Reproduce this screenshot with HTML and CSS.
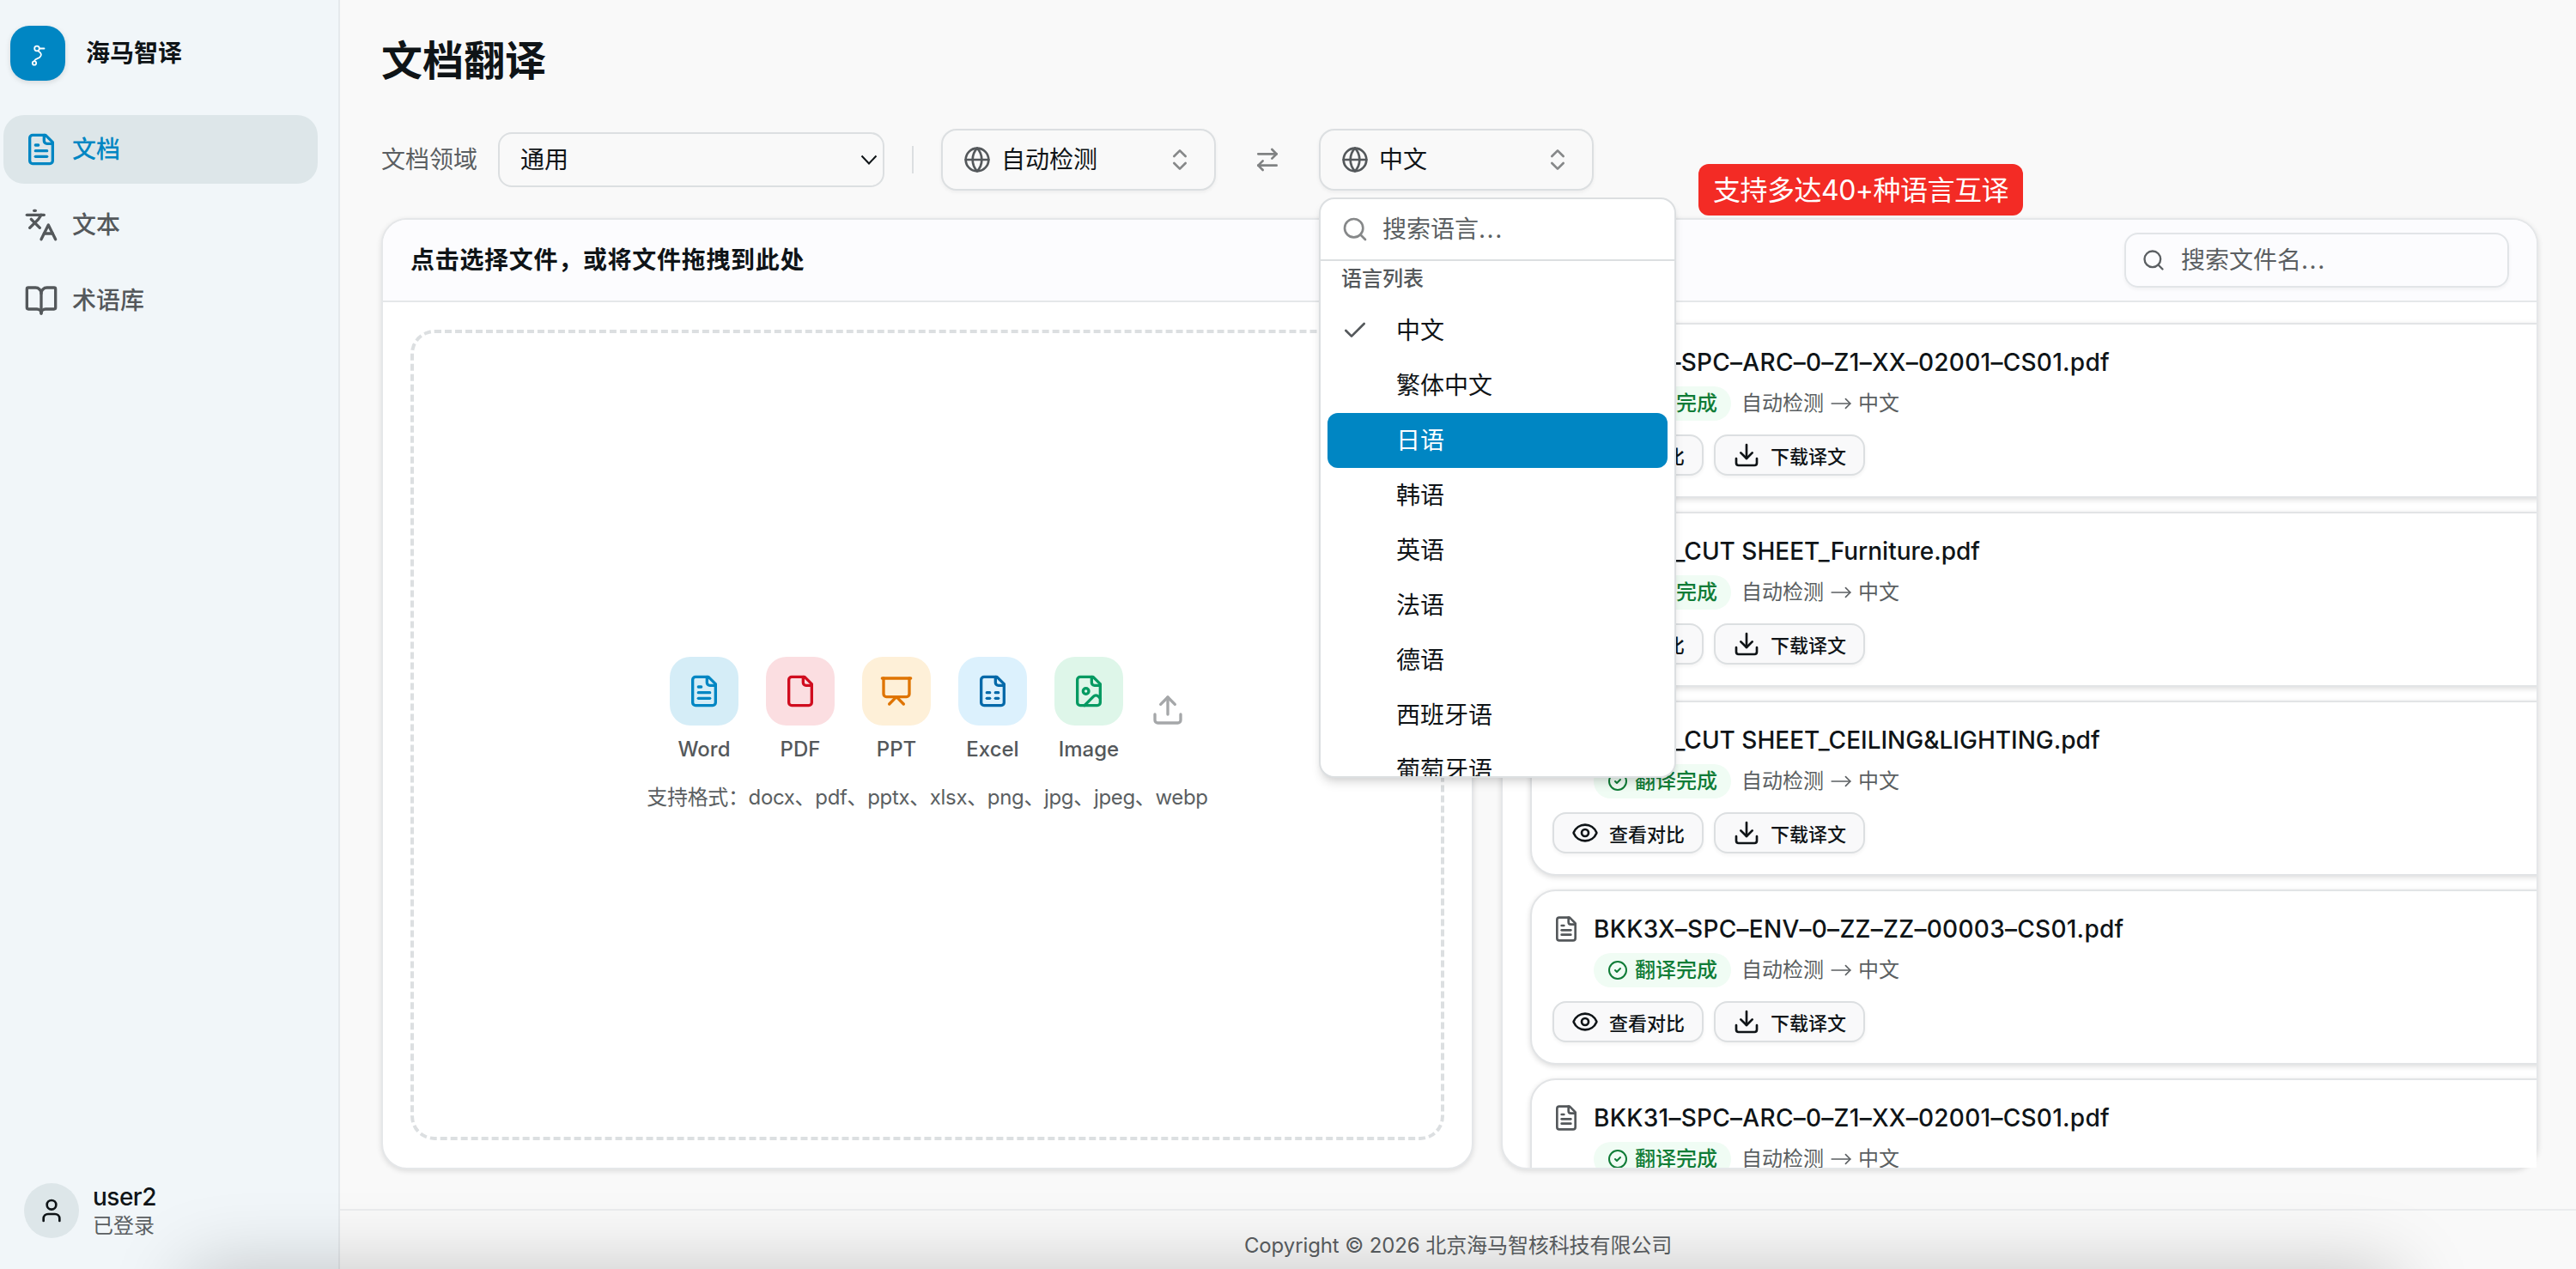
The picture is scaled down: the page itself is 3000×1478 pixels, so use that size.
FILE: index.html
```html
<!DOCTYPE html>
<html lang="zh-CN">
<head>
    <meta charset="UTF-8">
    <meta name="viewport" content="width=device-width, initial-scale=1.0">
    <title>海马智译 - 文档翻译</title>
    <link rel="stylesheet" href="styles.css">
</head>
<body>

<!-- Ícones reutilizados -->
<svg class="sprite" xmlns="http://www.w3.org/2000/svg">
    <symbol id="i-file-text" viewBox="0 0 24 24">
        <path d="M15 2H6a2 2 0 0 0-2 2v16a2 2 0 0 0 2 2h12a2 2 0 0 0 2-2V7Z"/>
        <path d="M14 2v4a2 2 0 0 0 2 2h4"/>
        <path d="M10 9H8"/><path d="M16 13H8"/><path d="M16 17H8"/>
    </symbol>
    <symbol id="i-file" viewBox="0 0 24 24">
        <path d="M15 2H6a2 2 0 0 0-2 2v16a2 2 0 0 0 2 2h12a2 2 0 0 0 2-2V7Z"/>
        <path d="M14 2v4a2 2 0 0 0 2 2h4"/>
    </symbol>
    <symbol id="i-sheet" viewBox="0 0 24 24">
        <path d="M15 2H6a2 2 0 0 0-2 2v16a2 2 0 0 0 2 2h12a2 2 0 0 0 2-2V7Z"/>
        <path d="M14 2v4a2 2 0 0 0 2 2h4"/>
        <path d="M8 13h2"/><path d="M14 13h2"/><path d="M8 17h2"/><path d="M14 17h2"/>
    </symbol>
    <symbol id="i-file-image" viewBox="0 0 24 24">
        <path d="M15 2H6a2 2 0 0 0-2 2v16a2 2 0 0 0 2 2h12a2 2 0 0 0 2-2V7Z"/>
        <path d="M14 2v4a2 2 0 0 0 2 2h4"/>
        <circle cx="10" cy="12" r="2"/>
        <path d="m20 17-1.296-1.296a2.41 2.41 0 0 0-3.408 0L9 22"/>
    </symbol>
    <symbol id="i-slides" viewBox="0 0 24 24">
        <path d="M2 3h20"/>
        <path d="M21 3v11a2 2 0 0 1-2 2H5a2 2 0 0 1-2-2V3"/>
        <path d="m7 21 5-5 5 5"/>
    </symbol>
    <symbol id="i-translate" viewBox="0 0 24 24">
        <path d="m5 8 6 6"/><path d="m4 14 6-6 2-3"/><path d="M2 5h12"/><path d="M7 2h1"/>
        <path d="m22 22-5-10-5 10"/><path d="M14 18h6"/>
    </symbol>
    <symbol id="i-book" viewBox="0 0 24 24">
        <path d="M12 7v14"/>
        <path d="M3 18a1 1 0 0 1-1-1V4a1 1 0 0 1 1-1h5a4 4 0 0 1 4 4 4 4 0 0 1 4-4h5a1 1 0 0 1 1 1v13a1 1 0 0 1-1 1h-6a3 3 0 0 0-3 3 3 3 0 0 0-3-3z"/>
    </symbol>
    <symbol id="i-user" viewBox="0 0 24 24">
        <path d="M19 21v-2a4 4 0 0 0-4-4H9a4 4 0 0 0-4 4v2"/>
        <circle cx="12" cy="7" r="4"/>
    </symbol>
    <symbol id="i-globe" viewBox="0 0 24 24">
        <circle cx="12" cy="12" r="10"/>
        <path d="M12 2a14.5 14.5 0 0 0 0 20 14.5 14.5 0 0 0 0-20"/>
        <path d="M2 12h20"/>
    </symbol>
    <symbol id="i-updown" viewBox="0 0 24 24">
        <path d="m7 15 5 5 5-5"/><path d="m7 9 5-5 5 5"/>
    </symbol>
    <symbol id="i-swap" viewBox="0 0 24 24">
        <path d="m16 3 4 4-4 4"/><path d="M20 7H4"/><path d="m8 21-4-4 4-4"/><path d="M4 17h16"/>
    </symbol>
    <symbol id="i-search" viewBox="0 0 24 24">
        <circle cx="11" cy="11" r="8"/><path d="m21 21-4.3-4.3"/>
    </symbol>
    <symbol id="i-check" viewBox="0 0 24 24">
        <path d="M20 6 9 17l-5-5"/>
    </symbol>
    <symbol id="i-check-circle" viewBox="0 0 24 24">
        <circle cx="12" cy="12" r="10"/><path d="m9 12 2 2 4-4"/>
    </symbol>
    <symbol id="i-upload" viewBox="0 0 24 24">
        <path d="M21 15v4a2 2 0 0 1-2 2H5a2 2 0 0 1-2-2v-4"/>
        <path d="m17 8-5-5-5 5"/><path d="M12 3v12"/>
    </symbol>
    <symbol id="i-download" viewBox="0 0 24 24">
        <path d="M21 15v4a2 2 0 0 1-2 2H5a2 2 0 0 1-2-2v-4"/>
        <path d="m7 10 5 5 5-5"/><path d="M12 15V3"/>
    </symbol>
    <symbol id="i-eye" viewBox="0 0 24 24">
        <path d="M2.062 12.348a1 1 0 0 1 0-.696 10.75 10.75 0 0 1 19.876 0 1 1 0 0 1 0 .696 10.75 10.75 0 0 1-19.876 0"/>
        <circle cx="12" cy="12" r="3"/>
    </symbol>
    <symbol id="i-arrow" viewBox="0 0 24 24">
        <path d="M2 12h20"/><path d="m17 7 5 5-5 5"/>
    </symbol>
</svg>

<aside class="sidebar">
    <div class="brand">
        <div class="brand-logo">
            <svg viewBox="0 0 64 64">
                <circle cx="31" cy="26.5" r="2.8"/>
                <path d="M34 26.5h5.5"/>
                <path d="M32.5 29.5c4 2 4.500 5 1.500 7.500-2.500 1.500-5 1.500-6 4"/>
                <circle cx="28" cy="43.500" r="2.200"/>
            </svg>
        </div>
        <span class="brand-name">海马智译</span>
    </div>
    <nav class="nav">
        <a class="nav-item active"><svg class="icon icon-lg"><use href="#i-file-text"/></svg>文档</a>
        <a class="nav-item"><svg class="icon icon-lg"><use href="#i-translate"/></svg>文本</a>
        <a class="nav-item"><svg class="icon icon-lg"><use href="#i-book"/></svg>术语库</a>
    </nav>
    <div class="user">
        <div class="avatar"><svg class="icon"><use href="#i-user"/></svg></div>
        <div>
            <div class="user-name">user2</div>
            <div class="user-status">已登录</div>
        </div>
    </div>
</aside>

<div class="page">
    <main class="main">
        <h1>文档翻译</h1>

        <div class="toolbar">
            <span class="toolbar-label">文档领域</span>
            <div class="select">通用
                <svg class="select-arrow" viewBox="0 0 20 12"><path d="M1.500 1.500 10 10.500l8.500-9"/></svg>
            </div>
            <div class="divider"></div>
            <div class="lang-btn">
                <svg class="icon"><use href="#i-globe"/></svg>
                <span>自动检测</span>
                <svg class="icon muted"><use href="#i-updown"/></svg>
            </div>
            <svg class="icon swap"><use href="#i-swap"/></svg>
            <div class="lang-picker">
                <div class="lang-btn">
                    <svg class="icon"><use href="#i-globe"/></svg>
                    <span>中文</span>
                    <svg class="icon muted"><use href="#i-updown"/></svg>
                </div>
                <div class="dropdown">
                    <div class="dropdown-search">
                        <svg class="icon"><use href="#i-search"/></svg>
                        <span>搜索语言<span class="dots">...</span></span>
                    </div>
                    <div class="dropdown-list">
                        <div class="dropdown-label">语言列表</div>
                        <div class="option"><svg class="icon"><use href="#i-check"/></svg>中文</div>
                        <div class="option">繁体中文</div>
                        <div class="option selected">日语</div>
                        <div class="option">韩语</div>
                        <div class="option">英语</div>
                        <div class="option">法语</div>
                        <div class="option">德语</div>
                        <div class="option">西班牙语</div>
                        <div class="option">葡萄牙语</div>
                    </div>
                </div>
                <div class="callout">支持多达40+种语言互译</div>
            </div>
        </div>

        <div class="panels">
            <section class="card upload-card">
                <div class="card-header"><h2>点击选择文件，或将文件拖拽到此处</h2></div>
                <div class="card-body">
                    <div class="dropzone">
                        <div class="formats">
                            <div class="format"><div class="tile word"><svg class="icon icon-lg"><use href="#i-file-text"/></svg></div>Word</div>
                            <div class="format"><div class="tile pdf"><svg class="icon icon-lg"><use href="#i-file"/></svg></div>PDF</div>
                            <div class="format"><div class="tile ppt"><svg class="icon icon-lg"><use href="#i-slides"/></svg></div>PPT</div>
                            <div class="format"><div class="tile excel"><svg class="icon icon-lg"><use href="#i-sheet"/></svg></div>Excel</div>
                            <div class="format"><div class="tile image"><svg class="icon icon-lg"><use href="#i-file-image"/></svg></div>Image</div>
                            <svg class="icon icon-lg upload-icon"><use href="#i-upload"/></svg>
                        </div>
                        <p class="hint">支持格式：docx、pdf、pptx、xlsx、png、jpg、jpeg、webp</p>
                    </div>
                </div>
            </section>

            <section class="card files-card">
                <div class="card-header">
                    <div class="file-search">
                        <svg class="icon"><use href="#i-search"/></svg>
                        <span>搜索文件名<span class="dots">...</span></span>
                    </div>
                </div>
                <div class="file-list">
                    <article class="file">
                        <div class="file-title code"><svg class="icon"><use href="#i-file-text"/></svg><span>BKK31–SPC–ARC–0–Z1–XX–02001–CS01.pdf</span></div>
                        <div class="file-meta">
                            <span class="status"><svg class="icon"><use href="#i-check-circle"/></svg>翻译完成</span>
                            <span class="route">自动检测<svg class="icon"><use href="#i-arrow"/></svg>中文</span>
                        </div>
                        <div class="file-actions">
                            <button class="btn"><svg class="icon"><use href="#i-eye"/></svg>查看对比</button>
                            <button class="btn"><svg class="icon"><use href="#i-download"/></svg>下载译文</button>
                        </div>
                    </article>
                    <article class="file">
                        <div class="file-title"><svg class="icon"><use href="#i-file-text"/></svg><span>BKK3X_CUT SHEET_Furniture.pdf</span></div>
                        <div class="file-meta">
                            <span class="status"><svg class="icon"><use href="#i-check-circle"/></svg>翻译完成</span>
                            <span class="route">自动检测<svg class="icon"><use href="#i-arrow"/></svg>中文</span>
                        </div>
                        <div class="file-actions">
                            <button class="btn"><svg class="icon"><use href="#i-eye"/></svg>查看对比</button>
                            <button class="btn"><svg class="icon"><use href="#i-download"/></svg>下载译文</button>
                        </div>
                    </article>
                    <article class="file">
                        <div class="file-title"><svg class="icon"><use href="#i-file-text"/></svg><span>BKK3X_CUT SHEET_CEILING&amp;LIGHTING.pdf</span></div>
                        <div class="file-meta">
                            <span class="status"><svg class="icon"><use href="#i-check-circle"/></svg>翻译完成</span>
                            <span class="route">自动检测<svg class="icon"><use href="#i-arrow"/></svg>中文</span>
                        </div>
                        <div class="file-actions">
                            <button class="btn"><svg class="icon"><use href="#i-eye"/></svg>查看对比</button>
                            <button class="btn"><svg class="icon"><use href="#i-download"/></svg>下载译文</button>
                        </div>
                    </article>
                    <article class="file">
                        <div class="file-title code"><svg class="icon"><use href="#i-file-text"/></svg><span>BKK3X–SPC–ENV–0–ZZ–ZZ–00003–CS01.pdf</span></div>
                        <div class="file-meta">
                            <span class="status"><svg class="icon"><use href="#i-check-circle"/></svg>翻译完成</span>
                            <span class="route">自动检测<svg class="icon"><use href="#i-arrow"/></svg>中文</span>
                        </div>
                        <div class="file-actions">
                            <button class="btn"><svg class="icon"><use href="#i-eye"/></svg>查看对比</button>
                            <button class="btn"><svg class="icon"><use href="#i-download"/></svg>下载译文</button>
                        </div>
                    </article>
                    <article class="file">
                        <div class="file-title code"><svg class="icon"><use href="#i-file-text"/></svg><span>BKK31–SPC–ARC–0–Z1–XX–02001–CS01.pdf</span></div>
                        <div class="file-meta">
                            <span class="status"><svg class="icon"><use href="#i-check-circle"/></svg>翻译完成</span>
                            <span class="route">自动检测<svg class="icon"><use href="#i-arrow"/></svg>中文</span>
                        </div>
                        <div class="file-actions">
                            <button class="btn"><svg class="icon"><use href="#i-eye"/></svg>查看对比</button>
                            <button class="btn"><svg class="icon"><use href="#i-download"/></svg>下载译文</button>
                        </div>
                    </article>
                </div>
            </section>
        </div>
    </main>
    <footer class="footer">Copyright © 2026 北京海马智核科技有限公司</footer>
</div>

<div class="bottom-shade"></div>

</body>
</html>
```

FILE: styles.css
```css
* {
    box-sizing: border-box;
}
body {
    display: flex;
    height: 1478px;
    margin: 0;
    overflow: hidden;
    font-family: Inter, "Noto Sans CJK SC", sans-serif;
    font-size: 28px;
    line-height: 40px;
    color: #0f1417;
    background-color: #f9f9f9;
}
h1, h2, p {
    margin: 0;
}
.sprite {
    position: absolute;
    width: 0;
    height: 0;
}
.icon {
    flex: none;
    width: 32px;
    height: 32px;
    fill: none;
    stroke: currentColor;
    stroke-width: 2;
    stroke-linecap: round;
    stroke-linejoin: round;
}
.icon-lg {
    width: 40px;
    height: 40px;
}
.dots {
    letter-spacing: 1.5px;
}

/* Barra lateral */
.sidebar {
    display: flex;
    flex-direction: column;
    flex: none;
    width: 396px;
    padding: 30px 24px 34px 4px;
    background-color: #f1f6f9;
    border-right: 2px solid #e5e9ec;
}
.brand {
    display: flex;
    align-items: center;
    gap: 24px;
    padding-left: 8px;
    margin-bottom: 40px;
}
.brand-logo {
    width: 64px;
    height: 64px;
    border-radius: 22px;
    background-color: #0086c3;
    box-shadow: 0 2px 6px rgba(0, 0, 0, 0.12);
}
.brand-logo svg {
    display: block;
    fill: none;
    stroke: #fff;
    stroke-width: 1.8;
    stroke-linecap: round;
}
.brand-name {
    font-weight: 600;
}
.nav {
    display: flex;
    flex-direction: column;
    gap: 8px;
}
.nav-item {
    display: flex;
    align-items: center;
    gap: 16px;
    height: 80px;
    padding: 0 24px;
    border-radius: 24px;
    font-weight: 500;
    color: #54585b;
}
.nav-item.active {
    color: #0086c3;
    background-color: #dde6e9;
}
.user {
    display: flex;
    align-items: center;
    gap: 16px;
    margin-top: auto;
    padding-left: 24px;
}
.avatar {
    display: flex;
    align-items: center;
    justify-content: center;
    width: 64px;
    height: 64px;
    border-radius: 50%;
    background-color: #dde6e9;
}
.user-name {
    font-weight: 500;
    line-height: 36px;
    letter-spacing: -0.5px;
}
.user-status {
    font-size: 24px;
    line-height: 32px;
    color: #5b5f62;
}

/* Conteúdo */
.page {
    display: flex;
    flex-direction: column;
    flex: 1;
    min-width: 0;
}
.main {
    flex: none;
    height: 1408px;
    padding: 39px 44px 0 48px;
}
h1 {
    font-size: 48px;
    line-height: 64px;
    font-weight: 600;
}
.toolbar {
    display: flex;
    align-items: center;
    height: 72px;
    margin: 47px 0 32px;
}
.toolbar-label {
    width: 136px;
    color: #5b5f62;
}
.select {
    display: flex;
    align-items: center;
    justify-content: space-between;
    width: 450px;
    height: 64px;
    padding: 0 6px 0 24px;
    border: 2px solid #dcdfe1;
    border-radius: 16px;
}
.select-arrow {
    width: 20px;
    height: 12px;
    fill: none;
    stroke: #0f1417;
    stroke-width: 2;
}
.divider {
    width: 2px;
    height: 32px;
    margin: 0 32px;
    background-color: #dcdfe1;
}
.lang-btn {
    display: flex;
    align-items: center;
    gap: 12px;
    width: 320px;
    height: 72px;
    padding: 0 24px;
    border: 2px solid #dcdfe1;
    border-radius: 18px;
    background-color: #f9f9f9;
    box-shadow: 0 2px 4px rgba(0, 0, 0, 0.05);
}
.lang-btn .icon {
    color: #54585b;
}
.lang-btn .muted {
    margin-left: auto;
    color: #868889;
}
.swap {
    margin: 0 44px;
    color: #808283;
}
.lang-picker {
    position: relative;
    z-index: 2;
}
.dropdown {
    position: absolute;
    top: 80px;
    left: 0;
    width: 416px;
    height: 676px;
    overflow: hidden;
    border: 2px solid #dcdfe1;
    border-radius: 18px;
    background-color: #fff;
    box-shadow: 0 8px 12px -2px rgba(0, 0, 0, 0.12), 0 4px 8px -4px rgba(0, 0, 0, 0.1);
}
.dropdown-search {
    display: flex;
    align-items: center;
    gap: 16px;
    height: 72px;
    padding: 0 24px;
    border-bottom: 2px solid #dcdfe1;
    color: #5b5f62;
}
.dropdown-search .icon {
    color: #868889;
}
.dropdown-list {
    padding: 0 8px;
}
.dropdown-label {
    height: 49px;
    padding: 5px 16px 0;
    font-size: 24px;
    line-height: 32px;
    font-weight: 500;
    color: #54585b;
}
.option {
    position: relative;
    height: 64px;
    padding-left: 80px;
    line-height: 64px;
    border-radius: 12px;
}
.option .icon {
    position: absolute;
    left: 16px;
    top: 16px;
    color: #54585b;
}
.option.selected {
    color: #fff;
    background-color: #0086c3;
}
.callout {
    position: absolute;
    top: 41px;
    left: 442px;
    height: 60px;
    padding: 0 17px;
    border-radius: 12px;
    font-size: 32px;
    line-height: 62px;
    letter-spacing: -0.5px;
    white-space: nowrap;
    color: #fff;
    background-color: #f32b25;
}

/* Painéis */
.panels {
    display: flex;
    gap: 32px;
    height: 1108px;
}
.card {
    display: flex;
    flex-direction: column;
    border: 2px solid #e5e7e9;
    border-radius: 30px;
    background-color: #fff;
    box-shadow: 0 2px 6px rgba(0, 0, 0, 0.12);
}
.upload-card {
    width: 1272px;
}
.files-card {
    width: 1208px;
}
.card-header {
    display: flex;
    align-items: center;
    flex: none;
    height: 96px;
    padding: 0 32px;
    border-bottom: 2px solid #e5e7e9;
    border-radius: 28px 28px 0 0;
    background-color: #fcfcfe;
}
h2 {
    font-size: 28px;
    font-weight: 600;
    letter-spacing: 0.7px;
}
.card-body {
    flex: 1;
    padding: 32px;
}
.dropzone {
    display: flex;
    flex-direction: column;
    align-items: center;
    height: 944px;
    padding-top: 377px;
    border: 4px dashed #dcdfe1;
    border-radius: 28px;
}
.formats {
    display: flex;
    align-items: center;
    gap: 32px;
}
.format {
    width: 80px;
    font-size: 24px;
    line-height: 32px;
    font-weight: 500;
    text-align: center;
    color: #54585b;
}
.tile {
    display: flex;
    align-items: center;
    justify-content: center;
    height: 80px;
    margin-bottom: 12px;
    border-radius: 24px;
}
.word {
    color: #0086c3;
    background-color: #d5edf7;
}
.pdf {
    color: #d00d1f;
    background-color: #fbdee1;
}
.ppt {
    color: #df7400;
    background-color: #fef0d8;
}
.excel {
    color: #0369a9;
    background-color: #dcf1fd;
}
.image {
    color: #059a62;
    background-color: #def6e9;
}
.upload-icon {
    color: #a5a7a9;
}
.hint {
    margin-top: 24px;
    font-size: 24px;
    line-height: 32px;
    letter-spacing: -0.34px;
    color: #5b5f62;
}

/* Lista de arquivos */
.file-search {
    display: flex;
    align-items: center;
    gap: 18px;
    width: 448px;
    height: 64px;
    margin-left: auto;
    padding: 0 18px;
    border: 2px solid #e2e5e8;
    border-radius: 16px;
    color: #5b5f62;
    box-shadow: 0 2px 4px rgba(0, 0, 0, 0.05);
}
.file-search .icon {
    width: 28px;
    height: 28px;
}
.file-list {
    flex: 1;
    overflow: hidden;
    padding: 24px 0 0 32px;
}
.file {
    width: 1240px;
    height: 204px;
    margin-bottom: 16px;
    padding: 24px;
    border: 2px solid #e2e4e6;
    border-radius: 30px;
    background-color: #fff;
    box-shadow: 0 2px 6px rgba(0, 0, 0, 0.14);
}
.file-title {
    display: flex;
    align-items: center;
    gap: 16px;
    font-weight: 500;
}
.file-title.code {
    letter-spacing: 0.27px;
}
.file-title .icon {
    color: #54585b;
}
.file-meta {
    display: flex;
    align-items: center;
    gap: 12px;
    margin: 8px 0 16px 48px;
    font-size: 24px;
}
.status {
    display: flex;
    align-items: center;
    gap: 8px;
    padding: 0 16px;
    border-radius: 20px;
    font-weight: 500;
    color: #107c37;
    background-color: #f0fcf4;
}
.status .icon {
    width: 24px;
    height: 24px;
}
.route {
    display: flex;
    align-items: center;
    gap: 7px;
    color: #5b5f62;
}
.route .icon {
    width: 26px;
    height: 26px;
    stroke-width: 1.5;
}
.file-actions {
    display: flex;
    gap: 12px;
}
.btn {
    display: flex;
    align-items: center;
    gap: 12px;
    width: 176px;
    height: 48px;
    padding: 0 20px;
    border: 2px solid #dcdfe1;
    border-radius: 16px;
    font-family: inherit;
    font-size: 22px;
    font-weight: 500;
    white-space: nowrap;
    color: #0f1417;
    background-color: #f9f9fa;
    box-shadow: 0 2px 4px rgba(0, 0, 0, 0.05);
}

.footer {
    height: 70px;
    padding-top: 21px;
    border-top: 2px solid #ebecee;
    font-size: 24px;
    line-height: 40px;
    letter-spacing: -0.1px;
    text-align: center;
    color: #5b5f62;
}
/* Sombra na base da janela */
.bottom-shade {
    position: fixed;
    left: 220px;
    right: 210px;
    top: 1480px;
    height: 100px;
    box-shadow: 0 0 90px rgba(0, 0, 0, 0.22);
    pointer-events: none;
}
```
